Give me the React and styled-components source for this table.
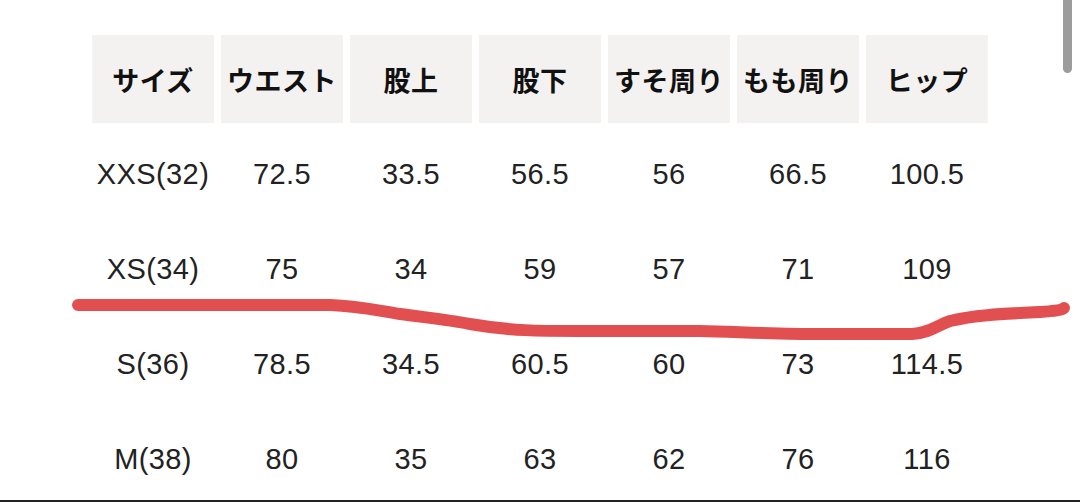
import React from 'react';
import styled, { createGlobalStyle } from 'styled-components';

const GlobalStyle = createGlobalStyle`
  html, body {
    margin: 0;
    padding: 0;
    background: #ffffff;
  }
`;

const headers = ['サイズ', 'ウエスト', '股上', '股下', 'すそ周り', 'もも周り', 'ヒップ'];

const rows = [
  ['XXS(32)', '72.5', '33.5', '56.5', '56', '66.5', '100.5'],
  ['XS(34)', '75', '34', '59', '57', '71', '109'],
  ['S(36)', '78.5', '34.5', '60.5', '60', '73', '114.5'],
  ['M(38)', '80', '35', '63', '62', '76', '116'],
];

const Page = styled.div`
  position: relative;
  height: 502px;
  box-sizing: border-box;
  overflow: hidden;
  border-bottom: 2px solid #222;
  background: #fff;
`;

const SizeTable = styled.div`
  display: grid;
  grid-template-columns: repeat(7, 122px);
  grid-auto-rows: 88px;
  gap: 7px;
  padding: 35px 0 0 92px;
`;

const Cell = styled.div`
  display: flex;
  align-items: center;
  justify-content: center;
  white-space: nowrap;
  background: ${(p) => (p.$head ? '#f3f2f0' : 'transparent')};
  color: ${(p) => (p.$head ? '#111' : '#222')};
  font-family: ${(p) =>
    p.$head
      ? '"Noto Sans CJK JP", sans-serif'
      : '"Liberation Sans", Arial, sans-serif'};
  font-weight: ${(p) => (p.$head ? 700 : 400)};
  font-size: ${(p) => (p.$head ? '27px' : '29px')};
  letter-spacing: ${(p) => (p.$head ? '0.5px' : '0.4px')};
`;

const Scrollbar = styled.div`
  position: absolute;
  top: -8px;
  right: 8px;
  width: 9px;
  height: 81px;
  border-radius: 5px;
  background: #9c9c9c;
`;

const Marker = styled.svg`
  position: absolute;
  left: 0;
  top: 0;
  pointer-events: none;
`;

export default function App() {
  return (
    <>
      <GlobalStyle />
      <Page>
        <SizeTable>
          {headers.map((h) => (
            <Cell key={h} $head>
              {h}
            </Cell>
          ))}
          {rows.map((r) =>
            r.map((v, i) => <Cell key={r[0] + i}>{v}</Cell>)
          )}
        </SizeTable>
        <Scrollbar />
        <Marker width="1080" height="502" viewBox="0 0 1080 502">
          <path
            d="M78 305 L330 305 C360 306 380 311 400 314 C430 318 450 320 470 324 C510 331 540 331 580 331 L700 331 C740 332 780 334 820 334 L912 334 C930 333 938 325 950 321 C975 315 1000 314 1040 312 C1055 311 1062 310 1064 308"
            fill="none"
            stroke="#e14f51"
            strokeWidth="12"
            strokeLinecap="round"
            strokeLinejoin="round"
          />
        </Marker>
      </Page>
    </>
  );
}
